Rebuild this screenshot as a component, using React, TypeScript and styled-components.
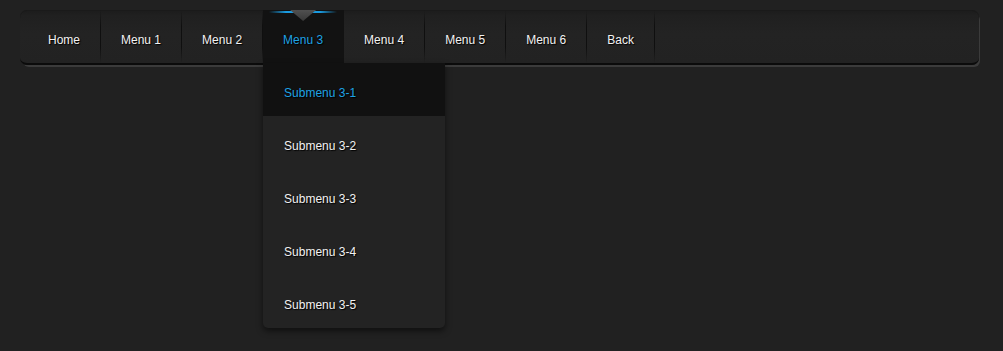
import React from "react";
import styled, { createGlobalStyle, css } from "styled-components";

const Global = createGlobalStyle`
  html, body {
    margin: 0;
    padding: 0;
    background: #212121;
    font-family: "Liberation Sans", Arial, sans-serif;
  }
`;

const Page = styled.div`
  padding: 10px 24px 0 20px;
  height: 341px;
`;

const Nav = styled.nav`
  position: relative;
  display: flex;
  align-items: stretch;
  height: 53px;
  padding-left: 8px;
  border-radius: 7px;
  background: linear-gradient(#1c1c1c 0px, #202020 6px, #232323 45%, #222222 100%);
  border-bottom: 2px solid #0b0b0b;
  box-shadow: 2px 3px 0 -1px #3b3b3b, inset 0 1px 0 #1a1a1a;
`;

const Item = styled.div<{ $active?: boolean }>`
  position: relative;
  display: flex;
  align-items: center;
  padding: 6px 20px 0;
  font-size: 12px;
  color: #f2f2f2;
  text-shadow: 1px 1px 1px #000;
  cursor: pointer;
  border-right: 1px solid transparent;

  &::after {
    content: "";
    position: absolute;
    right: -1px;
    top: 0;
    bottom: 0;
    width: 1px;
    background: linear-gradient(rgba(10,10,10,0), #0f0f0f 30%, #0f0f0f 70%, rgba(10,10,10,0));
  }

  ${(p) =>
    p.$active &&
    css`
      background: #121212;
      color: #1ea2e4;
      &::after {
        display: none;
      }
    `}
`;

const GlowLine = styled.span`
  position: absolute;
  top: 1px;
  left: 6px;
  right: 6px;
  height: 2px;
  background: linear-gradient(
    90deg,
    rgba(30, 162, 228, 0) 0%,
    #1a9be0 25%,
    #1a9be0 75%,
    rgba(30, 162, 228, 0) 100%
  );
`;

const Pointer = styled.span`
  position: absolute;
  top: 0;
  left: 50%;
  margin-left: -13px;
  width: 26px;
  height: 11px;
  background: linear-gradient(#505050, #383838);
  clip-path: polygon(0 0, 100% 0, 50% 100%);
`;

const Submenu = styled.div`
  position: absolute;
  top: 100%;
  left: 0;
  width: 182px;
  display: flex;
  flex-direction: column;
  background: #232323;
  border-radius: 0 0 5px 5px;
  box-shadow: 0 3px 6px rgba(0, 0, 0, 0.55);
  overflow: hidden;
  z-index: 2;
`;

const SubItem = styled.div<{ $active?: boolean }>`
  display: flex;
  align-items: center;
  height: 53px;
  box-sizing: border-box;
  padding: 6px 21px 0;
  font-size: 12px;
  color: ${(p) => (p.$active ? "#1ea2e4" : "#f2f2f2")};
  background: ${(p) => (p.$active ? "#111111" : "transparent")};
  text-shadow: 1px 1px 1px #000;
`;

const menus = ["Home", "Menu 1", "Menu 2", "Menu 3", "Menu 4", "Menu 5", "Menu 6", "Back"];
const subs = ["Submenu 3-1", "Submenu 3-2", "Submenu 3-3", "Submenu 3-4", "Submenu 3-5"];

export default function App() {
  return (
    <>
      <Global />
      <Page>
        <Nav>
          {menus.map((m) =>
            m === "Menu 3" ? (
              <Item key={m} $active>
                <GlowLine />
                <Pointer />
                {m}
                <Submenu>
                  {subs.map((s, i) => (
                    <SubItem key={s} $active={i === 0}>
                      {s}
                    </SubItem>
                  ))}
                </Submenu>
              </Item>
            ) : (
              <Item key={m}>{m}</Item>
            )
          )}
        </Nav>
      </Page>
    </>
  );
}
